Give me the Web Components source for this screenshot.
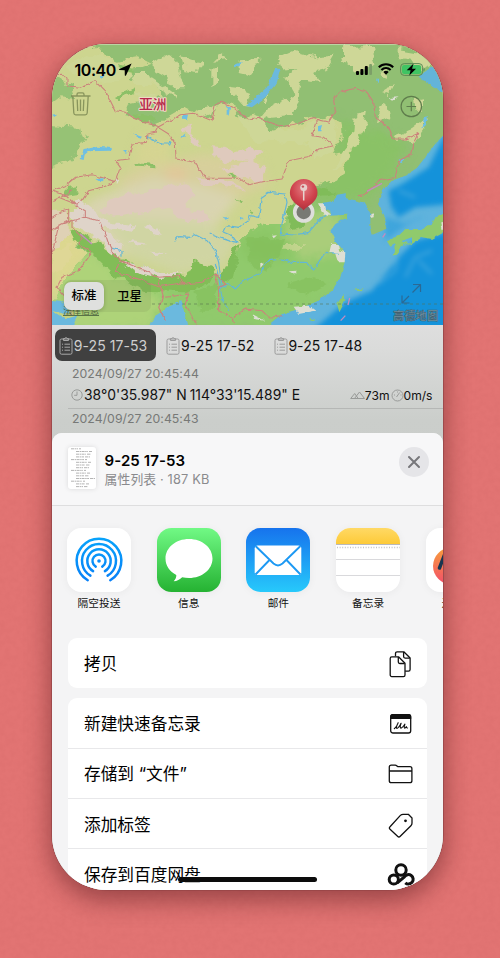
<!DOCTYPE html>
<html lang="zh-CN">
<head>
<meta charset="utf-8">
<title>分享</title>
<style>
html,body{margin:0;height:100%}
body{width:500px;height:958px;overflow:hidden;font-family:Inter,"Noto Sans CJK SC",sans-serif;color:#000}
</style>
</head>
<body>
<page-stage>
  <phone-frame>
    <map-view>
      <status-bar slot="status" time="10:40"></status-bar>
      <map-toggle slot="toggle"><span slot="on">标准</span><span slot="off">卫星</span></map-toggle>
    </map-view>
    <track-panel>
      <track-tab slot="tab" active>9-25 17-53</track-tab>
      <track-tab slot="tab">9-25 17-52</track-tab>
      <track-tab slot="tab">9-25 17-48</track-tab>
      <track-row stamp="2024/09/27 20:45:44" lat="38°0'35.987&quot; N" lon="114°33'15.489&quot; E" alt="73m" speed="0m/s"></track-row>
      <track-row stamp="2024/09/27 20:45:43"></track-row>
    </track-panel>
    <share-sheet slot="sheet">
      <sheet-header slot="header"><span slot="title">9-25 17-53</span><span slot="sub">属性列表 · 187 KB</span></sheet-header>
      <share-app slot="app" icon="airdrop">隔空投送</share-app>
      <share-app slot="app" icon="messages">信息</share-app>
      <share-app slot="app" icon="mail">邮件</share-app>
      <share-app slot="app" icon="notes">备忘录</share-app>
      <share-app slot="app" icon="more">连接我</share-app>
      <action-group>
        <action-row icon="copy">拷贝</action-row>
      </action-group>
      <action-group>
        <action-row icon="quicknote">新建快速备忘录</action-row>
        <action-row icon="folder">存储到 “文件”</action-row>
        <action-row icon="tag">添加标签</action-row>
        <action-row icon="baidu">保存到百度网盘</action-row>
      </action-group>
    </share-sheet>
  </phone-frame>
</page-stage>
<script>
function define(name, html) {
  customElements.define(name, class extends HTMLElement {
    constructor() {
      super();
      const a = k => this.getAttribute(k) || '';
      this.attachShadow({mode: 'open'}).innerHTML = typeof html === 'function' ? html(a, this) : html;
    }
  });
}

const svg = (w, h, body, extra = '') => `<svg width="${w}" height="${h}" viewBox="0 0 ${w} ${h}" fill="none" ${extra}>${body}</svg>`;

define('page-stage', `<style>
:host{display:block;position:relative;box-sizing:border-box;width:500px;height:958px;padding:44px 57px 0 52px;background:#e27473}
svg{position:absolute;inset:0;opacity:.06}
</style>
<svg width="500" height="958"><filter id="n" x="0" y="0" width="100%" height="100%"><feTurbulence type="fractalNoise" baseFrequency=".18" numOctaves="3"/><feColorMatrix values="0 0 0 0 .35  0 0 0 0 .05  0 0 0 0 .05  0 1.6 0 0 -.55"/></filter><rect width="500" height="958" filter="url(#n)"/></svg>
<slot></slot>`);

define('phone-frame', `<style>
:host{display:block;position:relative;width:391px;height:846px;border-radius:55px;box-shadow:0 0 0 .6px #8e4043,0 9px 24px 2px rgba(70,15,20,.45)}
.screen{width:391px;height:846px;border-radius:55px;overflow:hidden;display:flex;flex-direction:column;background:#cdcfcc;box-sizing:border-box}
.sheet{position:absolute;left:0;top:389px;width:391px;height:457px;border-radius:10px 10px 55px 55px;overflow:hidden}
.home{position:absolute;left:126px;top:832.5px;width:139px;height:5px;border-radius:3px;background:#0c0c0c}
</style><div class="screen"><slot></slot></div><div class="sheet"><slot name="sheet"></slot></div><div class="home"></div>`);

define('status-bar', a => `<style>
:host{display:flex;align-items:center;width:391px;height:52px;box-sizing:border-box;padding:0 18px 0 22.5px}
b{font-weight:600;font-size:16px;letter-spacing:-.45px;line-height:20px}
.r{margin-left:auto;display:flex;align-items:center;gap:6px;position:relative;top:-.8px}
svg{display:block}
.loc{margin:-2px 0 0 3.500px}
</style><b>${a('time')}</b>${svg(13,13,'<path d="M12.6.6.5 5.900c-.7.3-.5 1.200.2 1.200l5 .1.1 5c0 .8.9.9 1.200.2Z" fill="#000"/>','class="loc"')}
<div class="r">
${svg(16,11,'<rect y="7" width="3" height="4" rx="1" fill="#000"/><rect x="4.400" y="5" width="3" height="6" rx="1" fill="#000"/><rect x="8.800" y="2" width="3" height="9" rx="1" fill="#000"/><rect x="13.200" width="2.800" height="11" rx="1" fill="#7d9f68"/>')}
${svg(16,12,'<path d="M.8 4.200A10.400 10.400 0 0 1 15.200 4.200M3.400 6.900a6.700 6.700 0 0 1 9.200 0" stroke="#000" stroke-width="2.100"/><path d="M5.300 8.900a4 4 0 0 1 5.400 0L8 11.800Z" fill="#000"/>')}
${svg(25,13,'<rect x=".6" y=".6" width="22" height="11.800" rx="3.600" stroke="#5c8a55" stroke-width="1"/><rect x="2" y="2" width="19.200" height="9" rx="2.300" fill="#40c463"/><path d="M23.500 4.600v3.800c1.600-.5 1.600-3.300 0-3.800Z" fill="#5c8a55"/><path d="M13.400.7 6.700 7.300h3.900L9.300 12.400 16 5.700h-3.900Z" fill="#000"/>')}
</div>`);

define('map-toggle', `<style>
:host{display:flex;width:87px;height:32px;border-radius:7px;background:rgba(110,130,80,.16);align-items:center;font-size:12.500px;font-weight:500}
div{flex:1;text-align:center;line-height:28px}
.on{flex:0 0 40px;height:28px;border-radius:7px;background:#dfe0de;box-shadow:0 1px 4px rgba(0,0,0,.2)}
.off{padding-left:4px;position:relative;top:.5px}
</style><div class="on"><slot name="on"></slot></div><div class="off"><slot name="off"></slot></div>`);

const area = 'filterUnits="userSpaceOnUse" x="-30" y="-30" width="1240" height="920" color-interpolation-filters="sRGB"';
define('map-view', `<style>
:host{display:block;position:relative;width:391px;height:281px;flex:none;background:#cdd58f}
svg{position:absolute;left:0;top:0}
slot{display:block;position:absolute}
slot[name=status]{left:0;top:0}
slot[name=toggle]{left:12px;top:236px}
</style>
<svg width="391" height="281" viewBox="0 0 1173 843" fill="none" stroke-linejoin="round">
<defs>
<filter id="rag" ${area}><feTurbulence type="fractalNoise" baseFrequency=".03" numOctaves="3" seed="4"/><feDisplacementMap in="SourceGraphic" scale="34" xChannelSelector="R" yChannelSelector="G"/></filter>
<filter id="rag2" ${area}><feTurbulence type="fractalNoise" baseFrequency=".06" numOctaves="2" seed="9"/><feDisplacementMap in="SourceGraphic" scale="12" xChannelSelector="R" yChannelSelector="G"/></filter>
<filter id="soft" ${area}><feGaussianBlur stdDeviation="16"/></filter>
<filter id="soft2" ${area}><feGaussianBlur stdDeviation="8"/></filter>
<path id="seap" d="M1190 258 1150 300 1120 340 1095 372 1060 395 1020 410 1000 430 985 455 978 480 1000 520 1002 555 962 572 955 545 955 510 935 475 905 468 880 462 882 448 855 452 845 470 810 478 815 492 835 500 835 515 885 512 885 522 850 540 835 560 850 590 875 620 878 655 865 700 840 740 800 770 740 795 690 810 640 850H1190Z"/>
<clipPath id="seaclip"><use href="#seap"/></clipPath>
<clipPath id="green"><path d="M110 -20 150 30 200 50 260 40 300 60 230 85 240 110 300 110 330 160 230 180 220 205 270 210 300 240 340 225 400 190 440 200 480 225 490 180 520 172 560 195 545 225 600 215 620 250 650 272 690 245 740 240 770 225 830 215 865 235 870 280 845 330 900 320 875 390 820 420 780 430 740 460 715 490 700 540 640 540 600 560 570 590 548 650 520 690 500 700 470 680 430 655 400 700 330 705 260 690 190 650 130 605 60 560 70 600 110 625 40 700 0 780V870H1200V-20Z"/></clipPath>
</defs>
<g filter="url(#soft)">
<path d="M260 370 450 330 620 350 650 420 540 470 400 440 250 440 180 410Z" fill="#d7cf9b"/>
<path d="M345 370H400V430H340Z" fill="#e2c698"/>
<path d="M110 470 300 400 440 420 560 460 480 560 560 600 400 690 180 620 80 530Z" fill="#d9d4b0"/>
<path d="M140 510 470 540 540 600 520 660 380 690 240 640Z" fill="#d0d5a3"/>
<path d="M0 560 60 560 130 610 60 700 0 780Z" fill="#dcd78f"/>
<path d="M270 270 350 290 350 360 240 360Z" fill="#d5d491"/>
</g>
<g filter="url(#rag)">
<g clip-path="url(#green)">
<path d="M-20 -20H1200V870H-20Z" fill="#91bf73"/>
<g filter="url(#soft)">
<path d="M860 230 980 260 1060 300 1020 400 930 470 780 480 860 330Z" fill="#8ac266"/>
<path d="M500 560 720 480 900 500 900 720 700 850H-20V640L200 650 470 660Z" fill="#90ca6c"/>
<path d="M730 520 850 500 880 620 760 650 690 570Z" fill="#aacd7a"/>
<path d="M600 560 730 590 700 640 620 660 560 620Z" fill="#8ac563"/>
<path d="M0 640 130 620 200 690 330 750 300 860H0Z" fill="#aed379"/>
</g>
</g>
<path fill="#96c275" d="M-20 90 60 120 70 165 20 160-20 190ZM-20 240 90 245 100 285 60 350-20 380Z"/>
<path fill="#82bd57" d="M50 550 110 580 170 620 250 665 330 690 400 700 430 650 490 680 470 720 400 745 280 740 180 690 110 620 60 590Z"/>
<path fill="#80bc59" d="M705 490 740 480 760 550 715 560ZM715 445 790 430 860 450 800 460ZM545 620 560 600 545 700 515 720 510 690Z"/>
<path fill="#80bc56" opacity=".5" d="M590 580 700 580 680 640 640 680 590 660ZM430 740 500 720 480 800 440 800ZM700 720 780 700 830 720 760 760Z"/>
</g>
<g filter="url(#rag)" fill="#ced797">
<path d="M555 215 640 230 660 255 700 260 760 250 770 235 840 225 860 260 845 320 790 340 770 300 600 290Z"/>
<path d="M675 40 720 20 790 40 850 35 830 70 790 80 800 120 750 110 740 180 720 210 650 215 610 235 650 190 690 170 730 150 700 100 730 75 690 80Z"/>
<path d="M870 10 960 5 970 60 940 80 900 90 900 60 870 40ZM1040 15 1130 30 1150 60 1100 80 1080 50 1040 45ZM985 80 1010 70 1000 110ZM1000 180 1010 220 975 235 985 190ZM985 140 1020 130 1010 150Z"/>
<path d="M905 215 945 205 935 260 905 310 870 370 840 370 880 320 900 270ZM1020 280 1080 255 1120 225 1125 250 1095 290 1030 290Z"/>
<path d="M300 55 350 30 380 60 400 130 360 130 345 100 310 80ZM390 40 450 50 440 90 400 85ZM475 75 495 65 495 110 475 120ZM530 125 570 130 600 180 560 175ZM560 55 630 50 600 90 560 80ZM500 30 530 45 490 50Z"/>
<path d="M240 90 280 90 340 130 380 160 340 150 300 120 250 120ZM230 140 300 150 310 175 280 170ZM440 200 490 180 480 205 440 215ZM1085 165 1110 160 1110 200 1090 200ZM630 180 650 150 640 185Z"/>
<path d="M40 60 120 30 200 55 240 100 180 110 100 110ZM700 600 760 600 740 620 690 620Z" opacity=".7"/>
</g>
<g filter="url(#rag)" fill="#8cc067">
<path d="M190 160 250 130 245 145 200 175ZM255 355 310 360 310 370 260 365ZM590 500 610 505 600 518ZM530 390 560 400 540 402ZM200 60 250 75 240 85 200 75ZM40 435 75 430 80 450 45 455ZM240 205 310 215 290 240 250 225ZM550 455 570 480 560 480Z"/>
</g>
<g filter="url(#rag)" fill="#dfcabd">
<path d="M150 490 190 460 250 445 340 430 390 415 430 450 400 490 460 510 480 530 400 530 350 490 260 505 190 515 160 510Z"/>
<path d="M395 250 420 245 415 270 440 290 440 320 420 300 410 280ZM475 310 520 315 560 330 600 310 635 320 600 350 640 370 630 410 580 400 540 370 580 350 520 350 480 330ZM500 365 550 375 600 410 560 400ZM430 400 520 410 590 440 540 430 470 420Z"/>
<g fill="#dfd4c9"><path d="M70 470 110 490 160 530 250 545 240 560 150 550 210 600 200 640 150 600 100 560 60 540ZM230 590 290 600 250 605ZM300 620 350 625 310 630ZM300 540 330 570 280 560ZM205 650 330 690 400 690 330 702 250 680ZM340 780 370 790 350 820 335 800Z"/></g>
<path d="M0 500 50 500 50 560 0 630Z" fill="#dfd1b5"/>
<path d="M0 620 60 600 50 660 0 690Z" fill="#dfd796"/>
</g>
<g filter="url(#rag2)"><use href="#seap" fill="#5fb3dd"/></g>
<g clip-path="url(#seaclip)">
<g filter="url(#soft2)"><path d="M1200 230 1130 370 1050 420 1010 440 1020 500 1040 520 1090 490 1200 480ZM1200 560 1090 590 1050 630 1000 690 960 740 890 770 850 800 780 860H1200Z" fill="#1492da"/><path d="M1000 520 1060 540 1100 520 1040 560 1000 590Z" fill="#3fa5dc"/><path d="M1180 258 1130 330 1090 385 1020 425" stroke="#5bb5de" stroke-width="16"/>
<path d="M1020 490 1050 540 1110 520M1060 700 1090 640 1140 620M1040 620 1030 680 980 720M1100 650 1140 690M1040 440 1090 460" stroke="#4cabdd" stroke-width="7" opacity=".8"/></g>
</g>
<g filter="url(#rag2)">
<path d="M1185 500 1150 520 1140 540 1110 555 1060 555 1040 575 1005 592 1015 608 1030 600 1022 635 1035 632 1045 605 1060 595 1080 600 1110 580 1140 585 1185 560ZM1050 590 1080 580 1080 595 1055 605ZM875 750 855 780 862 805 880 770ZM900 738 935 733 925 742ZM775 823 790 825 780 832Z" fill="#90ca6c"/>
<path d="M1100 98 1130 75 1180 50V150L1150 132 1130 120Z" fill="#63b4d8"/>
<path d="M-10 768 30 770 50 800 75 820 60 850H-10ZM290 850 310 815 350 790 385 768 395 800 410 850ZM670 72 685 75 675 115 640 160 600 190 582 186 610 160 645 130Z" fill="#6bb9de"/>
<path d="M83 345 95 315 140 308 180 312 175 320 110 322 98 332 95 348ZM242 270 270 278 265 284ZM210 318 228 322 222 330ZM130 405 160 402 145 414ZM385 282 400 268 398 278ZM545 62 570 53 560 66 545 70ZM524 188 534 190 530 215 524 210ZM393 212 408 212 405 226 393 224ZM140 96 158 92 150 106ZM0 215 15 212 8 222ZM798 245 810 243 805 262 798 262ZM1115 222 1128 220 1122 245 1112 250ZM1040 345 1060 345 1048 358ZM515 520 530 520 525 532ZM560 518 575 522 565 530ZM972 104 982 104 978 116Z" fill="#6fbfe2"/>
<path d="M838 600 860 600 865 620 880 625 878 655 858 655 850 630 832 625ZM798 478 815 478 820 500 835 512 815 512ZM725 788 770 785 790 800 740 810ZM955 510 965 508 965 520 955 522ZM625 655 635 660 625 672ZM660 575 675 574 665 583ZM710 682 735 680 725 690ZM1165 540 1178 535 1170 560ZM190 405 200 410 195 420ZM600 810 640 830 610 826ZM1010 162 1040 160 1020 170Z" fill="#dedfd4"/>
<path d="M0 800 40 810 80 795 75 815 40 825Z" fill="#c4d381"/>
</g>
<g stroke="#62b6d8" stroke-width="3.500" filter="url(#rag2)">
<path d="M368 592 380 578 415 580 430 572 465 590 490 620 500 655 510 730 530 720 550 735 570 715 600 700 625 685 650 650 690 645 720 655 760 655 785 675 820 625 860 628M490 660 500 700 510 760 530 800M470 567 500 580 530 590 555 595 540 575 515 565 525 545 560 550 590 530 595 515 620 520 628 460 650 445 700 450 705 475 690 540 685 570 730 573 770 565 800 530 825 512M285 280 330 300 350 300 355 288M175 612 210 620 210 638"/>
</g>
<g stroke="#cc817c" stroke-width="3.200" filter="url(#rag2)">
<path d="M0 90 30 88 45 105 45 125 85 130 130 110 160 140 190 200 220 205 250 225 300 240 320 248 350 232 385 212 425 208 480 230 490 180 510 175 550 195 590 225 620 220 650 235 690 248 740 238 780 222 830 235 850 200 845 170 860 145 910 133 945 145 965 175 970 220 1010 250 1025 285 1060 285 1100 268 1085 300 1080 330 1040 350 1030 400 980 410 940 450 918 460"/>
<path d="M318 250 350 270 370 300 372 345 430 355 460 403 560 403 590 422 640 412 690 405 710 350 770 338 800 315 845 305 815 280 780 275 790 240 800 225M318 250 310 265 285 270 283 295 240 300 230 345 190 350 205 370 190 412 120 392 70 400 40 425 0 440M190 412 150 430 110 440 90 470 70 485 100 500 100 520 60 530 60 550 90 580 80 600 120 625M0 470 40 450 70 480 20 460M60 530 30 540 0 560M50 495 30 500 0 520M50 495 50 530 20 545 0 630M100 520 140 530 160 570 170 600 190 640 230 660 280 680 320 700 380 695 400 720 450 715 490 690 500 740 500 800 540 820 545 840M200 660 190 685 260 705 320 728 400 715M320 710 335 760 320 790 340 830M340 760 410 750 400 780 440 850M120 625 80 680 30 700 15 730 50 770 60 810M490 690 520 720 500 730M545 820 580 795 630 800 650 820 690 815M0 440 40 455 60 440"/>
</g>
<path d="M1000 568 992 580M893 762 888 783M880 815 866 830M945 442 990 418M120 600 85 570" stroke="#c48bc0" stroke-width="4"/>
<path d="M300 780H1173" stroke="#587150" stroke-width="2.500" stroke-dasharray="9 9" opacity=".7"/>
<g transform="translate(-156 -132) scale(3)">
<g stroke="#717f4b" stroke-width="1.300" opacity=".75"><path d="M71 96h19.500M77 96v-1.600a1.500 1.500 0 0 1 1.500-1.500h4a1.500 1.500 0 0 1 1.500 1.500V96M72.800 96l1 17a2 2 0 0 0 2 1.800h9.400a2 2 0 0 0 2-1.800l1-17M77.200 99.500l.5 11.500M80.500 99.500V111M83.800 99.500l-.5 11.500"/></g>
<g stroke="#5f7d4c" stroke-width="1.200"><circle cx="411.300" cy="106.500" r="10.200"/><path d="M406.500 106.500h9.600M411.300 101.700v9.600"/></g>
<g stroke="#315f83" stroke-width="1.200" opacity=".8"><path d="m402 303 7-7M412.500 292.500l8-8M402 295.500v7.500h7.500M413 284.500h7.500v7.500"/></g>
<circle cx="303.700" cy="212" r="9" fill="#787a73" stroke="#dededb" stroke-width="3.600"/>
<path d="M303.700 210.500c-2-4-13.800-7.500-13.800-17.700a13.800 13.800 0 0 1 27.600 0C317.500 203 305.700 206.500 303.700 210.500Z" fill="url(#pin)"/>
<defs><radialGradient id="pin" cx=".5" cy=".3" r=".75"><stop stop-color="#e27a80"/><stop offset=".55" stop-color="#cf434d"/><stop offset="1" stop-color="#a92c37"/></radialGradient></defs>
<circle cx="303.700" cy="187.500" r="3.500" fill="#e7cfcb"/><circle cx="302.900" cy="186.600" r="1.200" fill="#c4515a"/><path d="M303.700 190v10.500" stroke="#e6d5d0" stroke-width="1.500"/>
<text x="139" y="108.800" font-size="13.800" font-weight="500" font-family="Noto Sans CJK SC" fill="#b7284c" stroke="#ecdbc3" stroke-width="2" paint-order="stroke">亚洲</text>
<text x="393" y="320" font-size="11.300" font-weight="700" font-family="Noto Sans CJK SC" fill="#6f93a5" stroke="#465f6c" stroke-width=".5">高德地图</text>
<text x="63" y="314" font-size="9" font-family="Noto Sans CJK SC" fill="#4f6742" text-decoration="underline">法律信息</text>
</g>
<path d="M0 1.500H1173" stroke="#d7e4c4" stroke-width="3" opacity=".6"/>
</svg><slot name="status"></slot><slot name="toggle"></slot>`);

define('track-panel', `<style>
:host{display:block;flex:1;background:linear-gradient(#dedede,#dadbda 25px,#cbcecb 95px,#bdc0bd);color:#111}
nav{display:flex;gap:6px;padding:4px 0 0 3px}
</style><nav><slot name="tab"></slot></nav><slot></slot>`);

define('track-tab', `<style>
:host{display:flex;align-items:center;box-sizing:border-box;width:101.300px;height:32px;padding-left:4px;border-radius:7px;font-size:14px;letter-spacing:.05px;white-space:nowrap;color:#111;gap:.8px}
:host([active]){background:#404040;color:#cfcfcf}
svg{stroke:#9b9b9b;flex:none}:host([active]) svg{stroke:#a9a9a9}
</style>${svg(14,19,'<rect x="1" y="3" width="12" height="15.200" rx="1.500"/><path d="M4.500 4.500V2.600H6a1 1 0 0 1 2 0h1.500v1.900ZM5.500 8.200H11M5.500 11.200H11M5.500 14.200H11M3 8.200h1M3 11.200h1M3 14.200h1"/>')}<slot></slot>`);

define('track-row', a => `<style>
:host{display:block;margin-left:16px;border-bottom:1px solid #b5b7b5;height:48px;box-sizing:border-box;white-space:nowrap}
:host(:last-of-type){margin-top:-3.500px}
.s{font-size:12.300px;letter-spacing:.03px;color:#777977;padding:4px 0 0 4px;line-height:17px;height:17px}
.d{display:flex;align-items:center;font-size:13.900px;height:22px;margin:2px 10.500px 0 3px}
.d svg{flex:none;stroke:#999b99}.l{margin-left:1px}.o{margin-left:3px}.e{margin-left:auto;display:flex;align-items:center;font-size:12.100px}
</style><div class="s">${a('stamp')}</div><div class="d">${svg(12,12,'<circle cx="6" cy="6" r="5.200"/><path d="M6 2.500V6.300H3.200"/>')}${a('lat') ? `<span class="l">${a('lat')}</span><span class="o">${a('lon')}</span><span class="e">${svg(15,11,'<path d="m.7 8.500 4-5 3.500 5M4.500 8.500l5-6.500 5 6.500ZM.7 8.500h13"/>')}${a('alt')}<span style="width:1px"></span>${svg(13,13,'<circle cx="6.500" cy="6.500" r="5.500"/><path d="m5.500 8 3.200-4.500M3 6h1M6.500 2.500v1M9.500 6h1"/>')}${a('speed')}</span>` : ''}</div>`);

define('share-sheet', `<style>
:host{display:block;height:457px;background:#f4f4f5}
.apps{display:flex;height:118px;border-top:1px solid #dededf;padding:22px 0 0 15px;gap:25.700px;overflow:hidden;box-sizing:border-box}
.list{display:flex;flex-direction:column;gap:10px;padding:15px 16px 0}
</style><slot name="header"></slot><div class="apps"><slot name="app"></slot></div><div class="list"><slot></slot></div>`);

const doc = Array.from({length: 15}, (_, i) => `<path d="M${3 + (i % 4 === 0 ? 0 : 5)} ${1.800 + i * 2.700}h${7 + (i * 5) % 7}m1 0h${2 + i % 4}" stroke="#666" stroke-width=".7" stroke-dasharray="3 .6 1.500 .5" opacity=".7"/>`).join('');
define('sheet-header', `<style>
:host{display:flex;height:72px;box-sizing:border-box;padding:14px 14px 0 16px;background:#f7f7f8}
.t{width:28px;height:42px;background:#fff;border-radius:3px;box-shadow:0 0 5px rgba(0,0,0,.12)}
.x{margin-left:8.500px;padding-top:3.500px;line-height:19px}
.a{font-size:15px;font-weight:600;letter-spacing:.1px}.b{font-size:12.800px;color:#8a8a8d;letter-spacing:.15px}
.c{margin:0 0 0 auto;width:30px;height:30px;border-radius:50%;background:#e5e5e8;display:grid;place-items:center}
</style><div class="t">${svg(28,42,doc)}</div><div class="x"><div class="a"><slot name="title"></slot></div><div class="b"><slot name="sub"></slot></div></div><div class="c">${svg(14,14,'<path d="m2 2 10 10M12 2 2 12" stroke="#77777b" stroke-width="2" stroke-linecap="round"/>')}</div>`);

const arc = r => {
  const s = Math.sin(.53) * r, c = Math.cos(.53) * r;
  return `<path d="M${32 - s} ${33 + c}A${r} ${r} 0 1 1 ${32 + s} ${33 + c}"/>`;
};
const apps = {
  airdrop: `<defs><linearGradient id="a" gradientUnits="userSpaceOnUse" x1="0" y1="9" x2="0" y2="54"><stop stop-color="#08a4fb"/><stop offset="1" stop-color="#087ff7"/></linearGradient></defs><rect width="64" height="64" fill="#fff"/><g stroke="url(#a)" stroke-width="2.500" stroke-linecap="round">${[22.300,17,11.700,6.500].map(arc).join('')}</g><circle cx="32" cy="33" r="1.800" fill="#0c8df8"/>`,
  messages: `<defs><linearGradient id="g" x2="0" y2="1"><stop stop-color="#71f985"/><stop offset="1" stop-color="#25b232"/></linearGradient></defs><rect width="64" height="64" fill="url(#g)"/><path d="M32 11C18.800 11 8.500 19.600 8.500 30.500c0 7.200 4.300 13.100 10.800 16.500.2 2.200-.8 4.200-2.600 6.300 3.300-.2 6.200-1.700 8.500-4.100 2.200.5 4.400.8 6.800.8 13.200 0 23.500-8.600 23.500-19.500S45.200 11 32 11Z" fill="#fff"/>`,
  mail: `<defs><linearGradient id="m" x2="0" y2="1"><stop stop-color="#1673ed"/><stop offset="1" stop-color="#27c9fb"/></linearGradient></defs><rect width="64" height="64" fill="url(#m)"/><rect x="8.700" y="17.500" width="46.600" height="29.500" rx="2.800" fill="#fff"/><path d="M9.500 18 27.500 35.500Q32 39.300 36.500 35.500L54.500 18M9.500 46.500 23.500 32M54.500 46.500 40.500 32" stroke="#1d99f3" stroke-width="1.900"/>`,
  notes: `<defs><linearGradient id="n" x2="0" y2="1"><stop stop-color="#ffd965"/><stop offset="1" stop-color="#fdca38"/></linearGradient></defs><rect width="64" height="64" fill="#fff"/><rect width="64" height="16" fill="url(#n)"/><path d="M0 16.500H64" stroke="#b9b9bb"/><path d="M1 19.500H64" stroke="#c4c4c6" stroke-width="1.300" stroke-dasharray="1 1.600"/><path d="M0 31.500H64M0 47.500H64" stroke="#d9d9dc"/>`,
  more: `<defs><linearGradient id="o" x2="0" y2="1"><stop stop-color="#f79e3b"/><stop offset="1" stop-color="#f34e6a"/></linearGradient></defs><rect width="64" height="64" fill="#fff"/><circle cx="25.500" cy="38" r="18.500" fill="url(#o)"/><path d="m13.500 40 5-13M20 36l6-9" stroke="#173650" stroke-width="3.500" stroke-linecap="round"/>`
};
define('share-app', a => `<style>
:host{flex:none;width:64px;display:flex;flex-direction:column;align-items:center;gap:4px;font-size:10.700px;line-height:16px;white-space:nowrap;color:#111}
svg{display:block;border-radius:14.500px;box-shadow:0 1px 8px rgba(0,0,0,.05)}
</style>${svg(64,64,apps[a('icon')])}<slot></slot>`);

define('action-group', `<style>:host{display:block;border-radius:9px;background:#fff;overflow:hidden;flex:none}</style><slot></slot>`);

const glyphs = {
  copy: '<g stroke="#111" stroke-width="1.300" stroke-linejoin="round"><path d="M8.500 6.200V3.400a1.600 1.600 0 0 1 1.600-1.600h6.700l6.300 6.200v11.600a1.600 1.600 0 0 1-1.600 1.600h-3.400"/><path d="M16.600 2v4.600a1.500 1.500 0 0 0 1.500 1.500h4.700M4.800 6.800h6.700l6.500 6.400v11.800a1.600 1.600 0 0 1-1.600 1.600H4.800A1.600 1.600 0 0 1 3.200 25V8.400a1.600 1.600 0 0 1 1.600-1.600Z"/><path d="M11.300 7v5a1.500 1.500 0 0 0 1.500 1.500h4.900"/></g>',
  quicknote: '<rect x="3.700" y="4.700" width="20" height="18.300" rx="2.300" stroke="#111" stroke-width="1.300"/><path d="M3.200 9V6.500a2.500 2.500 0 0 1 2.500-2.500h16a2.500 2.500 0 0 1 2.500 2.500V9Z" fill="#111"/><path d="M7.300 18.700c1.500-1 3.200-3.800 3.900-6-1.300 2.400-2.200 5-1.400 5.700 1 .2 3-2.600 4.300-5.100-1 2.400-1.200 4.800-.1 4.800 1.300-.2 2.600-2.300 3.900-3.900-.8 2-1 3.900-.1 3.900.8-.2 1.100-.9 1.600-1.400 0 .9.400 1.500 1.200 1.300" stroke="#111" stroke-width="1.100" stroke-linecap="round" stroke-linejoin="round"/>',
  folder: '<g stroke="#111" stroke-width="1.300" stroke-linejoin="round"><path d="M2.300 20.700V7.100a2 2 0 0 1 2-2h3.900c1.700 0 1.800 1.600 3.500 1.600h11.200a2 2 0 0 1 2 2v12a2 2 0 0 1-2 2H4.300a2 2 0 0 1-2-2Z"/><path d="M2.300 11h22.600"/></g>',
  tag: '<path d="M2.800 16 13.400 4.400a3.800 3.800 0 0 1 2.700-1.100h5.200l3.700 3.700V12a3.800 3.800 0 0 1-1.100 2.800L13 25.500a1.500 1.500 0 0 1-2.200 0l-8-7.400a1.500 1.500 0 0 1 0-2.100Z" stroke="#111" stroke-width="1.300" stroke-linejoin="round"/><circle cx="18.500" cy="9.800" r="1.400" fill="#111"/>',
  baidu: '<g stroke="#111" stroke-width="3"><circle cx="14" cy="9" r="5.200"/><circle cx="6.800" cy="18.500" r="4.600"/><path d="M17.500 15.800a4.700 4.700 0 1 1 .8 6M10.300 21.800 17.800 15.500"/></g>'
};
define('action-row', a => `<style>
:host{display:flex;align-items:center;justify-content:space-between;box-sizing:border-box;height:50.300px;padding:0 12.500px 0 16px;font-size:16.700px;border-bottom:1px solid #e8e8ea;white-space:nowrap}
:host(:last-child){border-bottom:0}
svg{display:block;position:relative;top:1px}
</style><slot></slot>${svg(28,28,glyphs[a('icon')],'style="overflow:visible"')}`);
</script>
</body>
</html>
